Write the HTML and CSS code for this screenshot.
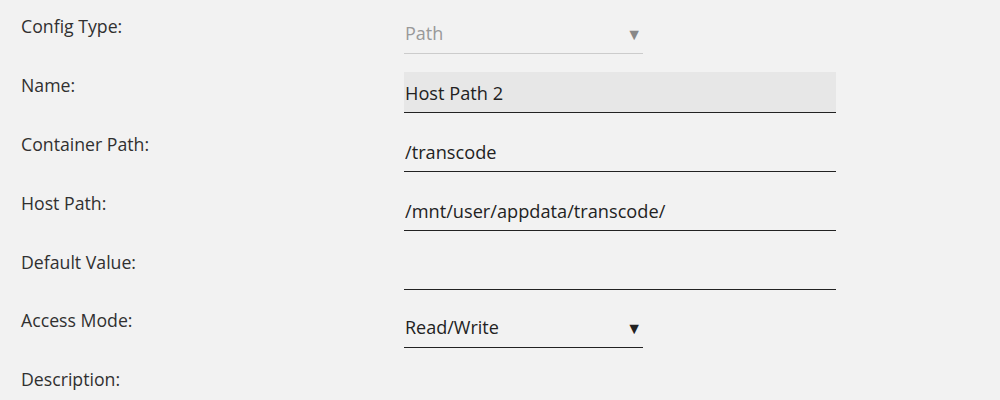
FILE: index.html
```html
<!DOCTYPE html>
<html lang="en">
<head>
	<meta charset="UTF-8">
	<title>Edit Configuration</title>
	<link rel="stylesheet" href="styles.css">
</head>
<body>
	<div id="config">
		<div class="row">
			<label class="label">Config Type:</label>
			<div class="select disabled">
				<span>Path</span>
				<span class="arrow">▼</span>
			</div>
		</div>
		<div class="row">
			<label class="label">Name:</label>
			<input class="field focus" value="Host Path 2">
		</div>
		<div class="row">
			<label class="label">Container Path:</label>
			<input class="field" value="/transcode">
		</div>
		<div class="row">
			<label class="label">Host Path:</label>
			<input class="field" value="/mnt/user/appdata/transcode/">
		</div>
		<div class="row">
			<label class="label">Default Value:</label>
			<input class="field" value="">
		</div>
		<div class="row">
			<label class="label">Access Mode:</label>
			<div class="select">
				<span>Read/Write</span>
				<span class="arrow">▼</span>
			</div>
		</div>
		<div class="row">
			<label class="label">Description:</label>
		</div>
	</div>
</body>
</html>
```

FILE: styles.css
```css
html, body {
	margin: 0;
	background-color: #f2f2f2;
}
body {
	font-family: "Open Sans", "Noto Sans", sans-serif;
	font-size: 17.7px;
	color: #303030;
}
#config {
	padding-top: 13px;
	display: flex;
	flex-direction: column;
	gap: 17.9px;
}
.row {
	display: flex;
	align-items: flex-start;
	height: 41px;
}
.label {
	width: 383px;
	padding-left: 21px;
	padding-top: 3px;
	line-height: 20px;
	flex: none;
}
.field {
	box-sizing: border-box;
	width: 432px;
	height: 41px;
	margin: 0;
	padding: 2px 0 0 1px;
	border: none;
	border-bottom: 1px solid #222;
	background: transparent;
	font-family: inherit;
	font-size: 18.2px;
	color: #222;
	outline: none;
}
.field.focus {
	background-color: #e7e7e7;
}
.select {
	box-sizing: border-box;
	width: 239px;
	height: 41px;
	padding: 0 1px;
	display: flex;
	align-items: center;
	justify-content: space-between;
	border-bottom: 1px solid #222;
	font-size: 18px;
	color: #222;
}
.select .arrow {
	font-size: 16px;
	padding-top: 1px;
}
.select.disabled {
	color: #999;
	border-bottom-color: #ccc;
}
.select.disabled .arrow {
	color: #888;
}
```
